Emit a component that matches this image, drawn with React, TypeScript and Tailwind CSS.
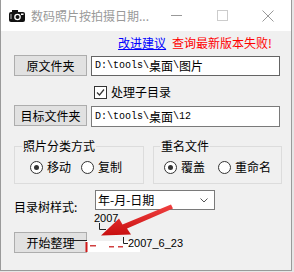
import React from "react";

const cjk = { fontFamily: '"Noto Sans CJK SC", "Noto Sans", sans-serif' };

function PathText({ parts }: { parts: string[] }) {
  // alternate: latin (mono, half-width), cjk (full-width)
  return (
    <span className="flex items-center whitespace-pre">
      {parts.map((p, i) =>
        /[\u4e00-\u9fff]/.test(p) ? (
          <span key={i} className="text-[12px] leading-[14px] text-black" style={cjk}>{p}</span>
        ) : (
          <span key={i} className="text-[10px] leading-[14px] text-black" style={{ fontFamily: '"Liberation Mono", monospace' }}>{p}</span>
        )
      )}
    </span>
  );
}

function WinButton({ label, className = "" }: { label: string; className?: string }) {
  return (
    <button
      className={`flex h-[21px] w-[73px] shrink-0 items-center justify-center border border-[#adadad] bg-[#e1e1e1] text-[12px] leading-[14px] text-black ${className}`}
      style={cjk}
    >
      {label}
    </button>
  );
}

function Radio({ checked, label }: { checked?: boolean; label: string }) {
  return (
    <span className="flex items-center gap-[4px]">
      <span className="flex h-[13px] w-[13px] items-center justify-center rounded-full border border-[#333] bg-white">
        {checked && <span className="h-[5px] w-[5px] rounded-full bg-[#333]" />}
      </span>
      <span className="text-[12px] leading-[14px] text-black" style={cjk}>{label}</span>
    </span>
  );
}

function CameraIcon() {
  return (
    <svg width="18" height="14" viewBox="0 0 18 14">
      <rect x="1" y="3" width="16" height="10" rx="2" fill="#111" />
      <rect x="4" y="1" width="6" height="3" fill="#111" />
      <circle cx="9.5" cy="8" r="3.3" fill="#fff" />
      <circle cx="9.5" cy="8" r="2" fill="#111" />
      <rect x="13" y="4.5" width="2.5" height="1.5" fill="#fff" />
      <rect x="2" y="5" width="2" height="5" fill="#666" />
    </svg>
  );
}

export default function App() {
  return (
    <div className="relative h-[272px] w-[294px] overflow-hidden bg-[#e6e6e6]" style={cjk}>
      <div className="flex h-[271px] w-[292px] flex-col border-x border-b border-[#9a9a9a]">
        {/* title bar */}
        <div className="flex h-[31px] shrink-0 items-center bg-white">
          <div className="ml-[7px] flex items-center">
            <CameraIcon />
          </div>
          <span className="ml-[5px] text-[12px] leading-[14px] text-[#999]" style={cjk}>数码照片按拍摄日期...</span>
          <div className="ml-auto flex items-center">
            <svg width="46" height="31" viewBox="0 0 46 31">
              <line x1="18" y1="15.5" x2="29" y2="15.5" stroke="#999" strokeWidth="1" />
            </svg>
            <svg width="46" height="31" viewBox="0 0 46 31">
              <rect x="18.5" y="10.5" width="10" height="10" fill="none" stroke="#ccc" strokeWidth="1" />
            </svg>
            <svg width="46" height="31" viewBox="0 0 46 31">
              <path d="M17.5 10.5 L28.5 21.5 M28.5 10.5 L17.5 21.5" stroke="#999" strokeWidth="1" />
            </svg>
          </div>
        </div>

        {/* body */}
        <div className="flex flex-1 flex-col bg-[#f0f0f0] pl-[13px]">
          <div className="mt-[5px] flex justify-end gap-[6px] pr-[19px] text-[12px] leading-[14px]">
            <span className="text-[#0000ff] underline">改进建议</span>
            <span className="text-[#ff0000]">查询最新版本失败!</span>
          </div>

          <div className="mt-[5px] flex items-start">
            <WinButton label="原文件夹" />
            <div className="ml-[4px] mt-[1px] flex h-[20px] w-[189px] items-center border border-[#646464] bg-white pl-[3px]">
              <PathText parts={["D:\\tools\\", "桌面", "\\", "图片"]} />
            </div>
          </div>

          <div className="ml-[80px] mt-[9px] flex items-center gap-[4px]">
            <span className="flex h-[13px] w-[13px] items-center justify-center border border-[#333] bg-white">
              <svg width="9" height="9" viewBox="0 0 9 9">
                <path d="M1 4.5 L3.5 7 L8 1.5" fill="none" stroke="#333" strokeWidth="1.2" />
              </svg>
            </span>
            <span className="text-[12px] leading-[14px] text-black">处理子目录</span>
          </div>

          <div className="mt-[6px] flex items-start">
            <WinButton label="目标文件夹" />
            <div className="ml-[4px] mt-[1px] flex h-[21px] w-[189px] items-center border border-[#7a7a7a] bg-white pl-[3px]">
              <PathText parts={["D:\\tools\\", "桌面", "\\12"]} />
            </div>
          </div>

          <div className="mt-[12px] flex gap-[9px]">
            <fieldset className="w-[130px] border border-[#dcdcdc] pb-[9px] pl-[15px]">
              <legend className="-ml-[8px] px-[1px] text-[12px] leading-[14px] text-black">照片分类方式</legend>
              <div className="mt-[7px] flex gap-[10px]">
                <Radio checked label="移动" />
                <Radio label="复制" />
              </div>
            </fieldset>
            <fieldset className="w-[129px] border border-[#dcdcdc] pb-[9px] pl-[10px]">
              <legend className="-ml-[4px] px-[1px] text-[12px] leading-[14px] text-black">重名文件</legend>
              <div className="mt-[7px] flex gap-[13px]">
                <Radio checked label="覆盖" />
                <Radio label="重命名" />
              </div>
            </fieldset>
          </div>

          <div className="mt-[6px] flex items-start">
            <span className="mt-[10px] w-[80px] text-[12px] leading-[14px] text-black">目录树样式:</span>
            <div className="ml-[1px] flex h-[20px] w-[120px] items-center justify-between border border-[#7a7a7a] bg-white pl-[2px] pr-[6px]">
              <span className="text-[12px] leading-[14px] text-black">年-月-日期</span>
              <svg width="8" height="5" viewBox="0 0 8 5">
                <path d="M0.5 0.5 L4 4 L7.5 0.5" fill="none" stroke="#555" strokeWidth="1" />
              </svg>
            </div>
          </div>

          <div className="mt-[18px] flex">
            <WinButton label="开始整理" />
          </div>
        </div>
      </div>

      {/* pasted tree snippet + arrow overlay */}
      <svg className="pointer-events-none absolute left-0 top-0" width="294" height="272" viewBox="0 0 294 272">
        <rect x="86" y="241" width="54" height="11" fill="#fff" />
        <line x1="72" y1="240.5" x2="87" y2="240.5" stroke="#222" strokeWidth="1" />
        <rect x="85.5" y="242" width="2" height="10" fill="#d01818" />
        <rect x="90" y="245" width="6" height="1.5" fill="#d04040" />
        <rect x="109" y="246" width="5" height="1.5" fill="#d04040" />
        <rect x="118" y="246" width="5" height="1.5" fill="#d04040" />
        <path d="M99.5 223 V229.5 H106" fill="none" stroke="#222" strokeWidth="1" />
        <path d="M123.5 237 V243.5 H128" fill="none" stroke="#222" strokeWidth="1" />
        <defs>
          <linearGradient id="ar" x1="0" y1="0" x2="0" y2="1">
            <stop offset="0" stopColor="#f04040" />
            <stop offset="1" stopColor="#c80e0e" />
          </linearGradient>
        </defs>
        <path d="M171 204.5 L173 208.5 L127 228.5 L131 234.5 L101 235.5 L119 218.5 L122.5 224.5 Z" fill="url(#ar)" />
      </svg>
      <span
        className="absolute left-[94px] top-[212px] text-[11px] leading-[12px] text-black"
        style={{ fontFamily: '"Liberation Sans", Arial, sans-serif' }}
      >
        2007
      </span>
      <span
        className="absolute left-[128px] top-[237px] text-[11px] leading-[12px] text-black"
        style={{ fontFamily: '"Liberation Sans", Arial, sans-serif' }}
      >
        2007_6_23
      </span>
    </div>
  );
}
